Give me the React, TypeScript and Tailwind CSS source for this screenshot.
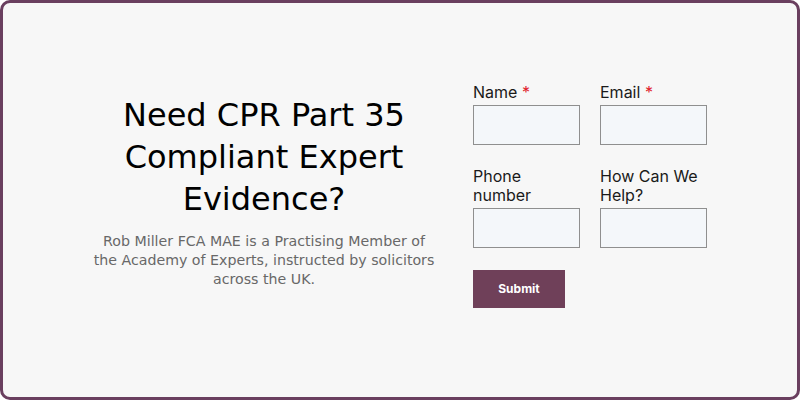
import React from "react";

function Field({ label, required }: { label: React.ReactNode; required?: boolean }) {
  return (
    <div className="flex flex-col w-[107px]">
      <label className="text-[16px] leading-[19px] text-[#1a1a1a] mb-[3px]">
        {label}
        {required && <span className="text-[#e0202a]"> *</span>}
      </label>
      <div className="h-[40px] w-[107px] border border-[#8f8f8f] bg-[#f4f7fa]" />
    </div>
  );
}

export default function App() {
  return (
    <div className="w-[800px] h-[400px] bg-white">
      <div className="w-[800px] h-[400px] border-[3px] border-[#6a3f5f] rounded-[10px] bg-[#f7f7f7] flex">
        <div className="w-[522px] shrink-0 flex flex-col items-center pt-[91px] font-['DejaVu_Sans',sans-serif]">
          <h1 className="text-[32px] leading-[42px] text-black text-center w-[330px]">
            Need CPR Part 35 Compliant Expert Evidence?
          </h1>
          <p className="mt-[12px] text-[14.2px] leading-[19px] text-[#686868] text-center w-[380px]">
            Rob Miller FCA MAE is a Practising Member of
            <br />
            the Academy of Experts, instructed by solicitors
            <br />
            across the UK.
          </p>
        </div>
        <div className="flex flex-col pt-[80px] ml-[-52px] font-['Inter',sans-serif]">
          <div className="flex gap-[20px] items-end">
            <Field label="Name" required />
            <Field label="Email" required />
          </div>
          <div className="flex gap-[20px] items-end mt-[22px]">
            <Field label={<>Phone<br />number</>} />
            <Field label={<>How Can We<br />Help?</>} />
          </div>
          <button className="mt-[22px] w-[92px] h-[38px] bg-[#6f4059] text-white text-[12px] font-bold">
            Submit
          </button>
        </div>
      </div>
    </div>
  );
}
